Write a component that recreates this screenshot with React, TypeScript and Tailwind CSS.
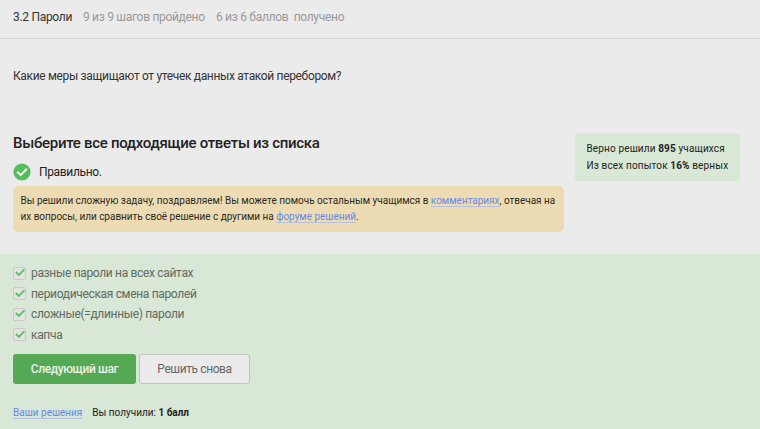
const answers = [
  'разные пароли на всех сайтах',
  'периодическая смена паролей',
  'сложные(=длинные) пароли',
  'капча',
];

function Tick() {
  return (
    <span className="flex h-[13px] w-[13px] shrink-0 items-center justify-center rounded-[2px] border border-[#c6cbc5] bg-[#e5e2e3]">
      <svg viewBox="0 0 12 12" className="h-3 w-3 shrink-0" fill="none" stroke="#58c35c" strokeWidth="1.8">
        <path d="M1.8 5 4.8 8 10.4 2.4" />
      </svg>
    </span>
  );
}

function Link({ children }: { children: string }) {
  return <a className="border-b border-[#b5c0dc] text-[#6689e8]">{children}</a>;
}

export default function App() {
  return (
    <div className="flex h-[429px] w-[760px] flex-col overflow-hidden whitespace-nowrap bg-[#ebebeb] font-['Roboto',sans-serif] text-[#222222]">
      <header className="flex h-[39px] shrink-0 items-center border-b border-[#d2d2d2] pb-[5px] pl-[13px] text-[12px] leading-4 tracking-[-0.3px]">
        <span className="w-[70px] text-[#333333]">3.2 Пароли</span>
        <span className="w-[133px] text-[#999999]">9 из 9 шагов пройдено</span>
        <span className="whitespace-pre text-[#999999]">6 из 6 баллов  получено</span>
      </header>

      <main className="flex h-[215px] shrink-0 flex-col pl-[13px] pt-[29px]">
        <p className="h-[65px] text-[12px] leading-4 tracking-[-0.34px] text-[#333333]">
          Какие меры защищают от утечек данных атакой перебором?
        </p>
        <div className="flex">
          <section className="w-[562px]">
            <h2 className="pt-px text-[15px] font-medium leading-[18px] tracking-[-0.3px]">Выберите все подходящие ответы из списка</h2>
            <div className="mt-[11px] flex h-[18px] items-center gap-2 text-[12px] tracking-[-0.34px]">
              <svg viewBox="0 0 18 18" className="h-[18px] w-[18px]">
                <circle cx="9" cy="9" r="8.6" fill="#55bd5b" />
                <path d="M4.2 8.8 7.7 12.2 13.8 5.8" fill="none" stroke="#f2f5f2" strokeWidth="2" />
              </svg>
              <span>Правильно.</span>
            </div>
            <div className="mt-[5px] h-[46px] w-[551px] rounded-[5px] bg-[#eddcb3] pl-[7.5px] pt-[7px] text-[10px] leading-[16px] tracking-[-0.02px] text-[#2c291f]">
              <p>
                Вы решили сложную задачу, поздравляем! Вы можете помочь остальным учащимся в <Link>комментариях</Link>, отвечая на
              </p>
              <p>
                их вопросы, или сравнить своё решение с другими на <Link>форуме решений</Link>.
              </p>
            </div>
          </section>
          <aside className="h-[48px] w-[165px] rounded-[3px] bg-[#d8e7d6] pl-[11.5px] pt-[7px] text-[10px] leading-[17px] tracking-[0.14px]">
            <p>Верно решили <b>895</b> учащихся</p>
            <p>Из всех попыток <b>16%</b> верных</p>
          </aside>
        </div>
      </main>

      <section className="grow bg-[#d8e7d6] pl-[13px] pt-[9px]">
        <ul className="text-[12px] leading-[20.5px] tracking-[-0.33px] text-[#5f6b5f]">
          {answers.map((answer) => (
            <li key={answer} className="flex h-[20.5px] items-center gap-[5px]">
              <Tick />
              <span>{answer}</span>
            </li>
          ))}
        </ul>
        <div className="mt-[9px] flex gap-[3px] text-[12px] tracking-[-0.4px]">
          <button className="h-[30px] w-[123px] rounded-[3px] bg-[#55a854] font-medium text-[#eaf2e9]">Следующий шаг</button>
          <button className="h-[30px] w-[111px] rounded-[3px] border border-[#bcc6bb] bg-[#ebebeb] text-[#666666]">Решить снова</button>
        </div>
        <footer className="mt-[21px] flex gap-[10px] text-[10px] leading-4">
          <span><Link>Ваши решения</Link></span>
          <span>Вы получили: <b>1 балл</b></span>
        </footer>
      </section>
    </div>
  );
}
